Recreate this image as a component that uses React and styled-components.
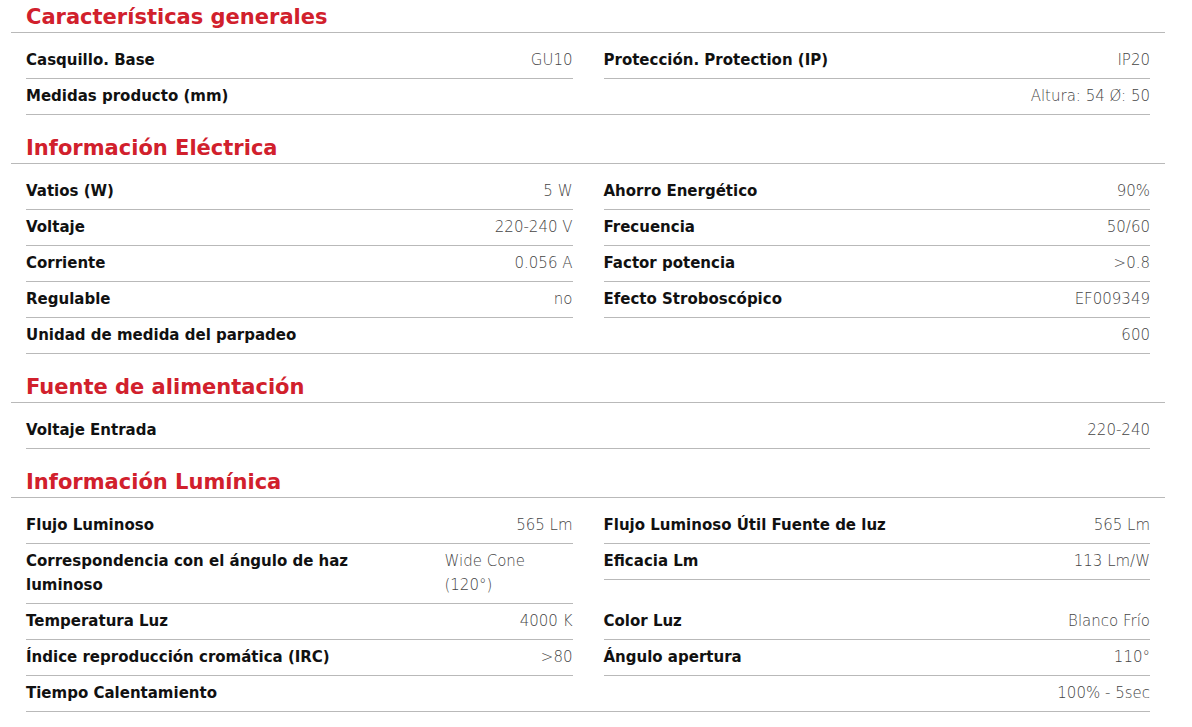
import React from 'react';
import styled, { createGlobalStyle } from 'styled-components';

const sections = [
	{
		title: 'Características generales',
		items: [
			{ label: 'Casquillo. Base', value: 'GU10' },
			{ label: 'Protección. Protection (IP)', value: 'IP20' },
			{ label: 'Medidas producto (mm)', value: 'Altura: 54 Ø: 50', full: true },
		],
	},
	{
		title: 'Información Eléctrica',
		items: [
			{ label: 'Vatios (W)', value: '5 W' },
			{ label: 'Ahorro Energético', value: '90%' },
			{ label: 'Voltaje', value: '220-240 V' },
			{ label: 'Frecuencia', value: '50/60' },
			{ label: 'Corriente', value: '0.056 A' },
			{ label: 'Factor potencia', value: '>0.8' },
			{ label: 'Regulable', value: 'no' },
			{ label: 'Efecto Stroboscópico', value: 'EF009349' },
			{ label: 'Unidad de medida del parpadeo', value: '600', full: true },
		],
	},
	{
		title: 'Fuente de alimentación',
		items: [{ label: 'Voltaje Entrada', value: '220-240', full: true }],
	},
	{
		title: 'Información Lumínica',
		items: [
			{ label: 'Flujo Luminoso', value: '565 Lm' },
			{ label: 'Flujo Luminoso Útil Fuente de luz', value: '565 Lm' },
			{ label: 'Correspondencia con el ángulo de haz luminoso', value: 'Wide Cone (120°)' },
			{ label: 'Eficacia Lm', value: '113 Lm/W' },
			{ label: 'Temperatura Luz', value: '4000 K' },
			{ label: 'Color Luz', value: 'Blanco Frío' },
			{ label: 'Índice reproducción cromática (IRC)', value: '>80' },
			{ label: 'Ángulo apertura', value: '110°' },
			{ label: 'Tiempo Calentamiento', value: '100% - 5sec', full: true },
		],
	},
];

const App = () => (
	<>
		<GlobalStyle />
		<Page>
			{sections.map((section) => (
				<Section key={section.title}>
					<Title>{section.title}</Title>
					<Grid>
						{section.items.map((item) => (
							<Row key={item.label} $full={item.full}>
								<Label>{item.label}</Label>
								<Value>{item.value}</Value>
							</Row>
						))}
					</Grid>
				</Section>
			))}
		</Page>
	</>
);

export default App;

const GlobalStyle = createGlobalStyle`
	body {
		margin: 0;
		background: #fff;
		font-family: 'DejaVu Sans', Inter, sans-serif;
	}
`;

const Page = styled.main`
	width: 1154px;
	padding: 4px 0 0 11px;
`;

const Section = styled.section`
	& + & {
		margin-top: 20px;
	}
`;

const Title = styled.h2`
	margin: 0;
	padding: 0 0 2px 15px;
	font-size: 21px;
	line-height: 26px;
	font-weight: 700;
	color: #d1202c;
	border-bottom: 1px solid #b9b9b9;
`;

const Grid = styled.div`
	display: grid;
	grid-template-columns: 1fr 1fr;
	column-gap: 31px;
	align-items: start;
	margin: 10px 15px 0;
`;

const Row = styled.div`
	grid-column: ${(p) => (p.$full ? '1 / -1' : 'auto')};
	display: flex;
	justify-content: space-between;
	gap: 30px;
	padding: 5px 0 6px;
	font-size: 15px;
	line-height: 24px;
	border-bottom: 1px solid #b9b9b9;
`;

const Label = styled.span`
	font-weight: 700;
	color: #111;
`;

const Value = styled.span`
	font-weight: 200;
	color: #454545;
`;
